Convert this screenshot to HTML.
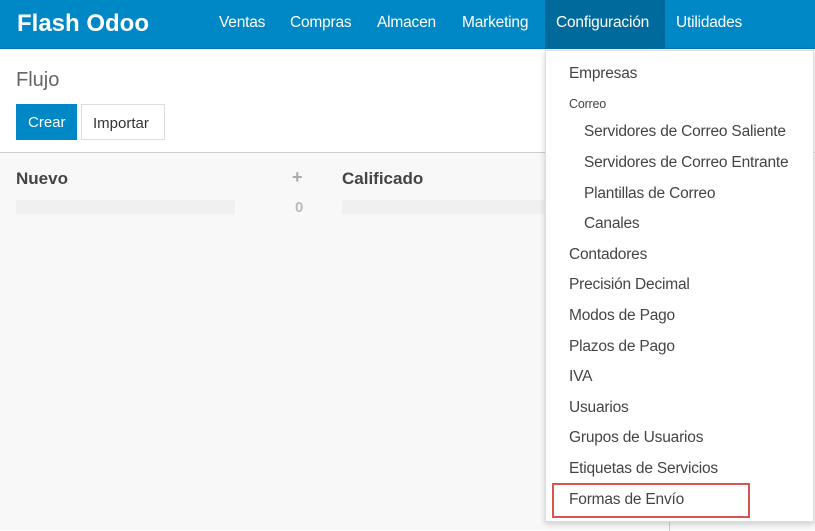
<!DOCTYPE html>
<html><head><meta charset="utf-8"><style>
*{margin:0;padding:0;box-sizing:border-box}
body{width:815px;height:530px;overflow:hidden;font-family:"Liberation Sans",sans-serif;background:#fff;position:relative}
.nav{position:absolute;left:0;top:0;width:815px;height:49px;background:#0087c5;border-bottom:1px solid #0079b2}
.logo{position:absolute;left:17px;top:10px;color:#fff;font-size:24px;font-weight:bold}
.ni{position:absolute;top:14px;color:#fff;font-size:15.5px;letter-spacing:-0.2px}
.act{position:absolute;left:545px;top:0;width:120px;height:49px;background:#006a9c}
.a{position:absolute}
.kb{position:absolute;left:0;top:152px;width:815px;height:378px;background:#f8f8f8;border-top:1px solid #ccc}
.dd{position:absolute;left:545px;top:50px;width:269px;height:472px;background:#fff;border:1px solid #ddd;box-shadow:0 2px 6px rgba(0,0,0,.18)}
.mi{position:absolute;font-size:15.5px;color:#444;white-space:nowrap;letter-spacing:-0.2px}
</style></head><body>
<div class="nav">
<div class="act"></div>
<div class="logo">Flash Odoo</div>
<div class="ni" style="left:219px">Ventas</div>
<div class="ni" style="left:290px">Compras</div>
<div class="ni" style="left:377px">Almacen</div>
<div class="ni" style="left:462px">Marketing</div>
<div class="ni" style="left:556px">Configuración</div>
<div class="ni" style="left:676px">Utilidades</div>
</div>
<div class="a" style="left:16px;top:69px;font-size:20px;color:#666">Flujo</div>
<div class="a" style="left:16px;top:104px;width:61px;height:36px;background:#0087c5;color:#fff;font-size:15px;padding:10px 0 0 12px">Crear</div>
<div class="a" style="left:81px;top:104px;width:84px;height:36px;border:1px solid #ddd;color:#333;font-size:15px;padding:10px 0 0 11px">Importar</div>
<div class="kb">
<div class="a" style="left:16px;top:16px;font-size:17px;font-weight:bold;color:#444">Nuevo</div>
<div class="a" style="left:292px;top:14px;font-size:18px;font-weight:bold;color:#aaa">+</div>
<div class="a" style="left:16px;top:47px;width:219px;height:14px;background:#eef0f2"></div>
<div class="a" style="left:295px;top:46px;font-size:15px;font-weight:bold;color:#bbb">0</div>
<div class="a" style="left:342px;top:16px;font-size:17px;font-weight:bold;color:#444">Calificado</div>
<div class="a" style="left:342px;top:47px;width:210px;height:14px;background:#eef0f2"></div>
<div class="a" style="left:669px;top:368px;width:1px;height:10px;background:#ccc"></div>
</div>
<div class="dd"></div>
<div class="mi" style="left:569px;top:65px">Empresas</div>
<div class="mi" style="left:569px;top:97px;font-size:12.5px">Correo</div>
<div class="mi" style="left:584px;top:123px">Servidores de Correo Saliente</div>
<div class="mi" style="left:584px;top:154px">Servidores de Correo Entrante</div>
<div class="mi" style="left:584px;top:185px">Plantillas de Correo</div>
<div class="mi" style="left:584px;top:215px">Canales</div>
<div class="mi" style="left:569px;top:246px">Contadores</div>
<div class="mi" style="left:569px;top:276px">Precisión Decimal</div>
<div class="mi" style="left:569px;top:307px">Modos de Pago</div>
<div class="mi" style="left:569px;top:338px">Plazos de Pago</div>
<div class="mi" style="left:569px;top:368px">IVA</div>
<div class="mi" style="left:569px;top:399px">Usuarios</div>
<div class="mi" style="left:569px;top:429px">Grupos de Usuarios</div>
<div class="mi" style="left:569px;top:460px">Etiquetas de Servicios</div>
<div class="mi" style="left:569px;top:491px">Formas de Envío</div>
<div class="a" style="left:552px;top:483px;width:198px;height:35px;border:2px solid #d9534f"></div>
</body></html>
